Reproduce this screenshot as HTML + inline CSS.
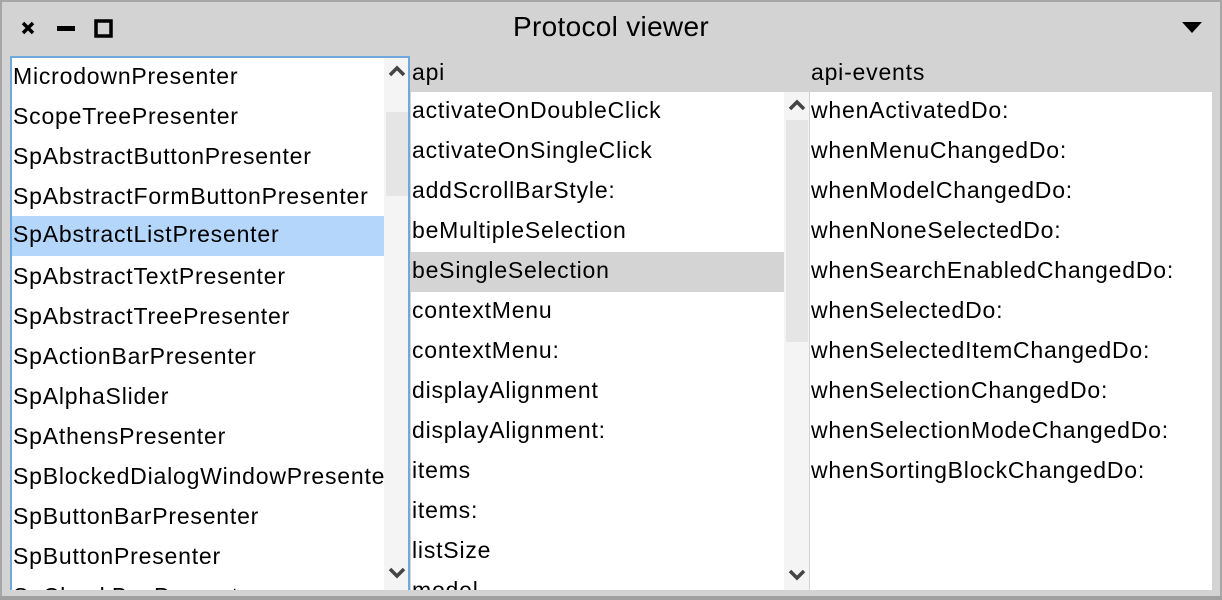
<!DOCTYPE html><html><head><style>
*{margin:0;padding:0;box-sizing:border-box}
body{width:1222px;height:600px;background:#d3d3d3;position:relative;overflow:hidden;font-family:"Liberation Sans",sans-serif;font-size:23px;letter-spacing:0.8px;color:#000}
.frame{position:absolute;inset:0;border:2px solid #a6a6a6;border-bottom:none}
.bot{position:absolute;left:0;right:0;bottom:0;height:4px;background:#a0a0a0}
.title{position:absolute;top:11px;left:0;width:1222px;text-align:center;font-size:28px;letter-spacing:0.3px}
.abs{position:absolute}
.row{position:absolute;left:0;height:40px;line-height:37px;padding-left:1px;white-space:nowrap}
.list{position:absolute;background:#fff;overflow:hidden}
.track{position:absolute;background:#f4f4f4}
.thumb{position:absolute;background:#e5e5e5}
.chev{position:absolute;width:20px;height:14px}
</style></head><body>
<div class="frame"></div>
<div class="title">Protocol viewer</div>
<svg class="abs" style="left:18px;top:18px" width="110" height="22">
<path d="M5 5 L15 15 M15 5 L5 15" stroke="#000" stroke-width="3.5"/>
<rect x="39" y="8" width="18" height="5" fill="#000"/>
<rect x="78" y="3" width="15" height="15" fill="none" stroke="#000" stroke-width="3.5"/>
</svg>
<svg class="abs" style="left:1181px;top:20px" width="22" height="14"><path d="M1 2 H21 L11 13 Z" fill="#000"/></svg>

<div class="list" style="left:10px;top:56px;width:400px;height:534px;border:2px solid #6fa8dc;border-bottom:none">
<div class="row" style="top:0;width:372px">MicrodownPresenter</div>
<div class="row" style="top:40px">ScopeTreePresenter</div>
<div class="row" style="top:80px">SpAbstractButtonPresenter</div>
<div class="row" style="top:120px">SpAbstractFormButtonPresenter</div>
<div class="row" style="top:158px;width:372px;background:#b3d6fa">SpAbstractListPresenter</div>
<div class="row" style="top:200px">SpAbstractTextPresenter</div>
<div class="row" style="top:240px">SpAbstractTreePresenter</div>
<div class="row" style="top:280px">SpActionBarPresenter</div>
<div class="row" style="top:320px">SpAlphaSlider</div>
<div class="row" style="top:360px">SpAthensPresenter</div>
<div class="row" style="top:400px">SpBlockedDialogWindowPresenter</div>
<div class="row" style="top:440px">SpButtonBarPresenter</div>
<div class="row" style="top:480px">SpButtonPresenter</div>
<div class="row" style="top:520px">SpCheckBoxPresenter</div>
<div class="track" style="left:372px;top:0;width:26px;height:534px"></div>
<div class="thumb" style="left:374px;top:54px;width:22px;height:84px"></div>
<svg class="chev" style="left:375px;top:6px"><path d="M3 11 L10 4 L17 11" stroke="#444" stroke-width="3.5" fill="none"/></svg>
<svg class="chev" style="left:375px;top:508px"><path d="M3 3 L10 10 L17 3" stroke="#444" stroke-width="3.5" fill="none"/></svg>
</div>

<div class="abs" style="left:412px;top:58px;line-height:28px">api</div>
<div class="list" style="left:411px;top:92px;width:398px;height:498px">
<div class="row" style="top:0">activateOnDoubleClick</div>
<div class="row" style="top:40px">activateOnSingleClick</div>
<div class="row" style="top:80px">addScrollBarStyle:</div>
<div class="row" style="top:120px">beMultipleSelection</div>
<div class="row" style="top:160px;width:373px;background:#d4d4d4">beSingleSelection</div>
<div class="row" style="top:200px">contextMenu</div>
<div class="row" style="top:240px">contextMenu:</div>
<div class="row" style="top:280px">displayAlignment</div>
<div class="row" style="top:320px">displayAlignment:</div>
<div class="row" style="top:360px">items</div>
<div class="row" style="top:400px">items:</div>
<div class="row" style="top:440px">listSize</div>
<div class="row" style="top:480px">model</div>
<div class="track" style="left:373px;top:0;width:25px;height:498px"></div>
<div class="thumb" style="left:375px;top:28px;width:22px;height:222px"></div>
<svg class="chev" style="left:376px;top:6px"><path d="M3 11 L10 4 L17 11" stroke="#444" stroke-width="3.5" fill="none"/></svg>
<svg class="chev" style="left:376px;top:476px"><path d="M3 3 L10 10 L17 3" stroke="#444" stroke-width="3.5" fill="none"/></svg>
</div>

<div class="abs" style="left:811px;top:58px;line-height:28px">api-events</div>
<div class="list" style="left:810px;top:92px;width:402px;height:498px">
<div class="row" style="top:0">whenActivatedDo:</div>
<div class="row" style="top:40px">whenMenuChangedDo:</div>
<div class="row" style="top:80px">whenModelChangedDo:</div>
<div class="row" style="top:120px">whenNoneSelectedDo:</div>
<div class="row" style="top:160px">whenSearchEnabledChangedDo:</div>
<div class="row" style="top:200px">whenSelectedDo:</div>
<div class="row" style="top:240px">whenSelectedItemChangedDo:</div>
<div class="row" style="top:280px">whenSelectionChangedDo:</div>
<div class="row" style="top:320px">whenSelectionModeChangedDo:</div>
<div class="row" style="top:360px">whenSortingBlockChangedDo:</div>
</div>
<div class="bot"></div>
</body></html>
